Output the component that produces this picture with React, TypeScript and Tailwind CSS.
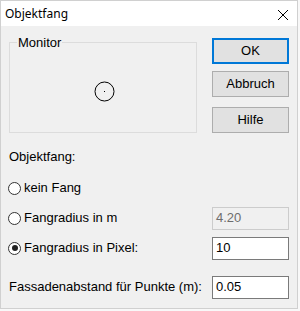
import React from "react";

const body = { fontFamily: '"Liberation Sans", Arial, sans-serif' };

function Radio({ checked }: { checked?: boolean }) {
  return (
    <span className="w-[13px] h-[13px] rounded-full border border-[#333333] bg-white flex items-center justify-center shrink-0 -ml-px">
      {checked && <span className="w-[6px] h-[6px] rounded-full bg-[#222222]" />}
    </span>
  );
}

function Btn({ label, primary }: { label: string; primary?: boolean }) {
  return (
    <div
      className={
        "w-[77px] h-[26px] bg-[#e1e1e1] flex items-center justify-center text-[13px] text-black " +
        (primary ? "border-2 border-[#0078d7]" : "border border-[#adadad]")
      }
    >
      {label}
    </div>
  );
}

function Field({ value, disabled }: { value: string; disabled?: boolean }) {
  return (
    <div
      className={
        "ml-auto w-[77px] h-[23px] flex items-center pl-[3px] text-[13px] " +
        (disabled
          ? "border border-[#cccccc] bg-[#f0f0f0] text-[#6d6d6d]"
          : "border border-[#7a7a7a] bg-white text-black")
      }
    >
      {value}
    </div>
  );
}

export default function App() {
  return (
    <div className="w-[300px] h-[311px] bg-[#f8f8f8]" style={body}>
      <div className="w-[298px] h-[309px] border border-[#d0d0d0] bg-[#f0f0f0] flex flex-col">
        <div className="h-[25px] bg-white flex items-center justify-between pl-[4px] pr-[9px] shrink-0">
          <span className="text-[12px] text-black" style={{ fontFamily: '"Noto Sans", sans-serif' }}>
            Objektfang
          </span>
          <svg width="10" height="10" viewBox="0 0 10 10" className="mt-[2px]">
            <path d="M0 0 L10 10 M10 0 L0 10" stroke="#000" strokeWidth="1" />
          </svg>
        </div>
        <div className="flex flex-col px-[8px] pt-[9px] text-[13px] text-black">
          <div className="flex gap-[15px]">
            <fieldset className="relative w-[188px] h-[98px] border border-[#dcdcdc] p-0 m-0">
              <legend className="ml-[7px] px-px leading-[15px] text-[13px]">Monitor</legend>
              <svg width="21" height="21" viewBox="0 0 21 21" className="absolute left-[84px] top-[31px]">
                <circle cx="10.5" cy="10.5" r="9.5" fill="none" stroke="#000" strokeWidth="1" />
                <rect x="10" y="10" width="1" height="1" fill="#000" />
              </svg>
            </fieldset>
            <div className="flex flex-col pt-[3px]">
              <Btn label="OK" primary />
              <div className="h-[7px]" />
              <Btn label="Abbruch" />
              <div className="h-[10px]" />
              <Btn label="Hilfe" />
            </div>
          </div>
          <div className="h-[20px] mt-[14px] flex items-center">Objektfang:</div>
          <div className="h-[30px] mt-[6px] flex items-center gap-[3px]">
            <Radio />
            <span>kein Fang</span>
          </div>
          <div className="h-[30px] flex items-center gap-[3px]">
            <Radio />
            <span>Fangradius in m</span>
            <Field value="4.20" disabled />
          </div>
          <div className="h-[30px] flex items-center gap-[3px]">
            <Radio checked />
            <span>Fangradius in Pixel:</span>
            <Field value="10" />
          </div>
          <div className="h-[30px] mt-[9px] flex items-center">
            <span>Fassadenabstand für Punkte (m):</span>
            <Field value="0.05" />
          </div>
        </div>
      </div>
    </div>
  );
}
